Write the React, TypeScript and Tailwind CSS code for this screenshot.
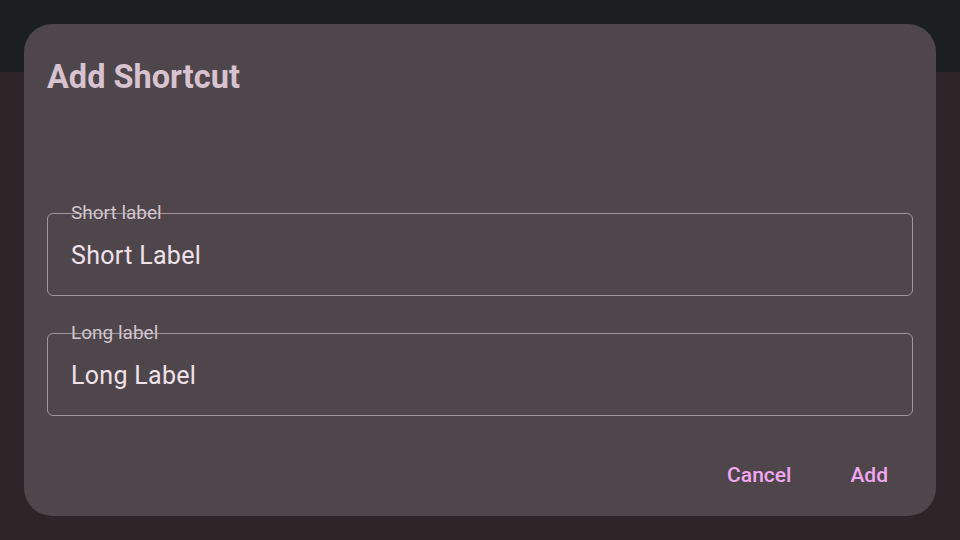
export default function App() {
  return (
    <div className="relative h-[540px] w-[960px] overflow-hidden bg-[#2e2529] font-['Roboto',sans-serif]">
      <div className="h-[72px] bg-[#1b1f22]" />
      <div className="absolute left-[24px] top-[24px] flex h-[492px] w-[912px] flex-col rounded-[28px] bg-[#4f464c] px-[23px] pt-[37px]">
        <h1 className="text-[32.5px] font-bold leading-none text-[#d6c3cf]">Add Shortcut</h1>
        <div className="mt-[119px] flex flex-col gap-[37px]">
          <Field label="Short label" value="Short Label" />
          <Field label="Long label" value="Long Label" />
        </div>
        <div className="mt-[49px] flex justify-end gap-[59px] pr-[25px] text-[21px] font-medium leading-none text-[#f2a8f0]">
          <span>Cancel</span>
          <span>Add</span>
        </div>
      </div>
    </div>
  );
}

function Field({ label, value }: { label: string; value: string }) {
  return (
    <div className="relative flex h-[83px] items-center rounded-[6px] border border-[#a0959c] px-[23px] pt-[4px]">
      <span className="absolute left-[23px] top-[-11px] text-[19px] leading-none text-[#d2c5cd]">{label}</span>
      <span className="text-[25px] tracking-[0.3px] text-[#efe2ea]">{value}</span>
    </div>
  );
}
